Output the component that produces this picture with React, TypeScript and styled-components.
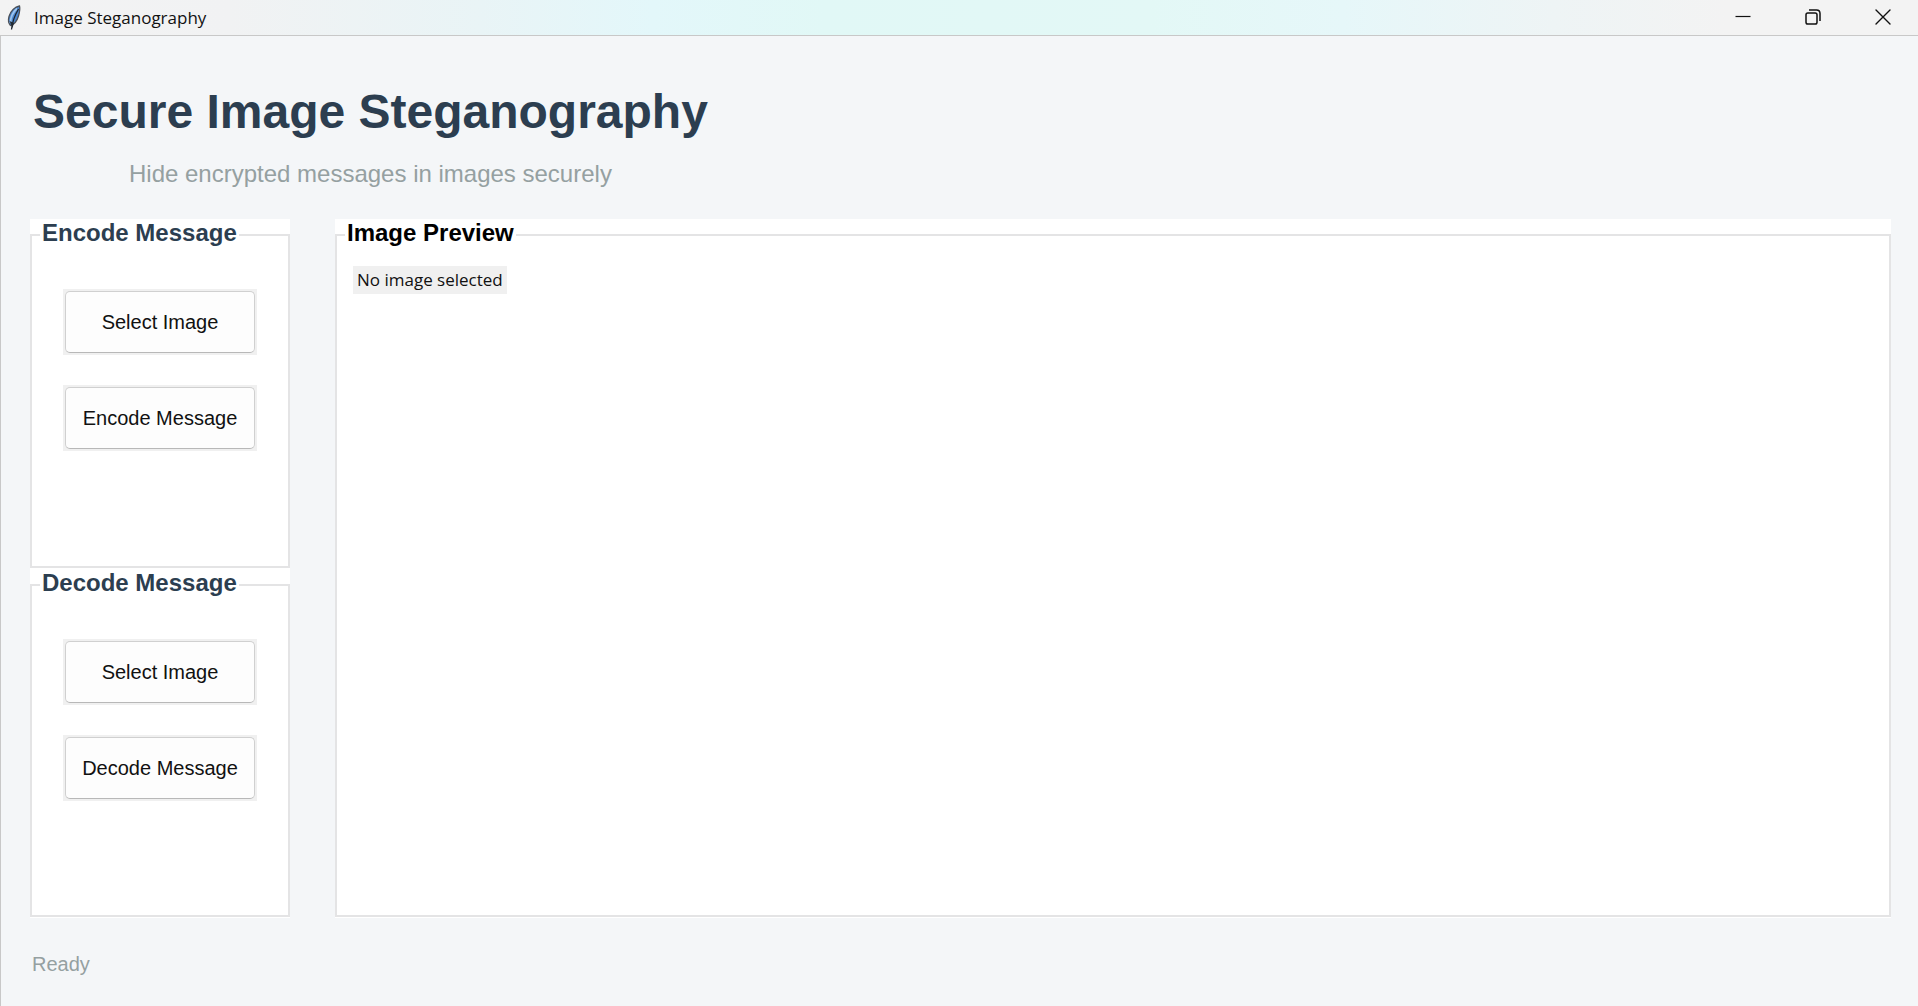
import React from "react";
import styled, { createGlobalStyle } from "styled-components";

const arial = `"Liberation Sans", Arial, sans-serif`;
const segoe = `"Open Sans", "Noto Sans", sans-serif`;

const GlobalStyle = createGlobalStyle`
  *, *::before, *::after { box-sizing: border-box; }
  body { margin: 0; background: #f4f6f8; font-family: ${arial}; }
`;

const Window = styled.div`
  display: flex;
  flex-direction: column;
  min-height: 100vh;
`;

const TitleBar = styled.header`
  display: flex;
  align-items: center;
  height: 36px;
  padding-left: 6px;
  border-bottom: 1px solid #c8c8c8;
  background: linear-gradient(
    90deg,
    #f3f3f3 0%,
    #f1f2f3 12%,
    #e9f4f6 25%,
    #e3f7fa 34%,
    #e1f8f6 43%,
    #e3f8f6 60%,
    #e6f7f9 70%,
    #eef4f5 81%,
    #f3f3f3 90%
  );
`;

const WindowName = styled.span`
  flex: 1;
  padding-left: 12px;
  font: 400 17px/24px ${segoe};
  color: #111;
`;

const CaptionButton = styled.button`
  display: flex;
  align-items: center;
  justify-content: center;
  width: 70px;
  height: 34px;
  padding: 0 0 2px;
  border: 0;
  background: transparent;
  color: #111;
`;

const Client = styled.main`
  display: flex;
  flex: 1;
  flex-direction: column;
  padding: 44px 27px 0 29px;
  border-left: 1px solid #c8c8c8;
`;

const Heading = styled.div`
  align-self: flex-start;
  padding-left: 3px;
  margin-bottom: 29px;
  text-align: center;
`;

const AppTitle = styled.h1`
  margin: 0;
  font-size: 48px;
  font-weight: 700;
  line-height: 64px;
  color: #2c3e50;
`;

const Subtitle = styled.p`
  margin: 14px 0 0;
  font-size: 24px;
  line-height: 32px;
  color: #95a0a1;
`;

const Workspace = styled.div`
  display: flex;
  flex: 1;
  gap: 45px;
`;

const Sidebar = styled.div`
  display: flex;
  flex-direction: column;
`;

const Panel = styled.div`
  display: flex;
  flex: 1;
  padding-bottom: 1px;
  background: #fff;
`;

const Group = styled.fieldset`
  flex: 1;
  min-width: 0;
  margin: 0;
  padding: 0 8px;
  border: 2px solid #e4e4e5;
`;

const Legend = styled.legend<{ $color: string }>`
  padding: 0 2px 4px;
  font-size: 24px;
  font-weight: 700;
  line-height: 28px;
  color: ${(p) => p.$color};
`;

const Actions = styled.div`
  display: flex;
  flex-direction: column;
  gap: 30px;
  padding: 38px 23px;
`;

const ButtonFrame = styled.div`
  display: flex;
  padding: 2px;
  background: #f0f0f0;
`;

const ActionButton = styled.button`
  width: 190px;
  height: 62px;
  padding: 0;
  border: 1px solid #d0d0d0;
  border-bottom-color: #b8b8b8;
  border-radius: 5px;
  background: #fdfdfd;
  font: 400 20px/24px ${arial};
  color: #111;
`;

const PreviewLabel = styled.output`
  display: block;
  width: fit-content;
  margin: 15px 8px;
  padding: 0 4px;
  background: #f0f0f0;
  font: 400 17px/28px ${segoe};
  color: #111;
`;

const Status = styled.footer`
  height: 88px;
  padding: 34px 2px;
  font-size: 20px;
  line-height: 24px;
  color: #95a0a1;
`;

function Feather() {
  return (
    <svg width="16" height="26" viewBox="0 0 16 26" aria-hidden="true">
      <path d="M13.500 1C9 2 4.500 6 3 11.500C2 15 2.300 18 4.500 20.500C8 19.500 11 16 12.500 11C13.500 7.500 14.300 4 13.500 1Z" fill="#4a86cf" stroke="#4b5058" strokeWidth="1.300" />
      <path d="M4.500 18C4 13 7 7 11 3.500" fill="none" stroke="#9cc4ee" strokeWidth="1.800" />
      <path d="M12.500 4C9.500 9 6.500 15 5.500 24.500" fill="none" stroke="#1d2530" strokeWidth="1.300" />
      <path d="M3.500 16L6.500 23L8 18Z" fill="#222a33" />
    </svg>
  );
}

function MinimizeIcon() {
  return (
    <svg width="16" height="16" viewBox="0 0 16 16" aria-hidden="true">
      <path d="M0.500 7.500H15.500" stroke="currentColor" strokeWidth="1.200" />
    </svg>
  );
}

function RestoreIcon() {
  return (
    <svg width="16" height="16" viewBox="0 0 16 16" fill="none" stroke="currentColor" aria-hidden="true">
      <rect x="1" y="4" width="11" height="11" rx="1.800" strokeWidth="1.500" />
      <path d="M4 1H11.500Q15 1 15 4.500V12" strokeWidth="1.500" />
    </svg>
  );
}

function CloseIcon() {
  return (
    <svg width="16" height="16" viewBox="0 0 16 16" aria-hidden="true">
      <path d="M1 1L15 15M15 1L1 15" stroke="currentColor" strokeWidth="1.400" strokeLinecap="round" />
    </svg>
  );
}

function ActionGroup({ title, actions }: { title: string; actions: string[] }) {
  return (
    <Panel>
      <Group>
        <Legend $color="#2c3e50">{title}</Legend>
        <Actions>
          {actions.map((label) => (
            <ButtonFrame key={label}>
              <ActionButton type="button">{label}</ActionButton>
            </ButtonFrame>
          ))}
        </Actions>
      </Group>
    </Panel>
  );
}

export default function App() {
  return (
    <Window>
      <GlobalStyle />
      <TitleBar>
        <Feather />
        <WindowName>Image Steganography</WindowName>
        <CaptionButton type="button" aria-label="Minimize"><MinimizeIcon /></CaptionButton>
        <CaptionButton type="button" aria-label="Restore"><RestoreIcon /></CaptionButton>
        <CaptionButton type="button" aria-label="Close"><CloseIcon /></CaptionButton>
      </TitleBar>
      <Client>
        <Heading>
          <AppTitle>Secure Image Steganography</AppTitle>
          <Subtitle>Hide encrypted messages in images securely</Subtitle>
        </Heading>
        <Workspace>
          <Sidebar>
            <ActionGroup title="Encode Message" actions={["Select Image", "Encode Message"]} />
            <ActionGroup title="Decode Message" actions={["Select Image", "Decode Message"]} />
          </Sidebar>
          <Panel>
            <Group>
              <Legend $color="#000">Image Preview</Legend>
              <PreviewLabel>No image selected</PreviewLabel>
            </Group>
          </Panel>
        </Workspace>
        <Status>Ready</Status>
      </Client>
    </Window>
  );
}
